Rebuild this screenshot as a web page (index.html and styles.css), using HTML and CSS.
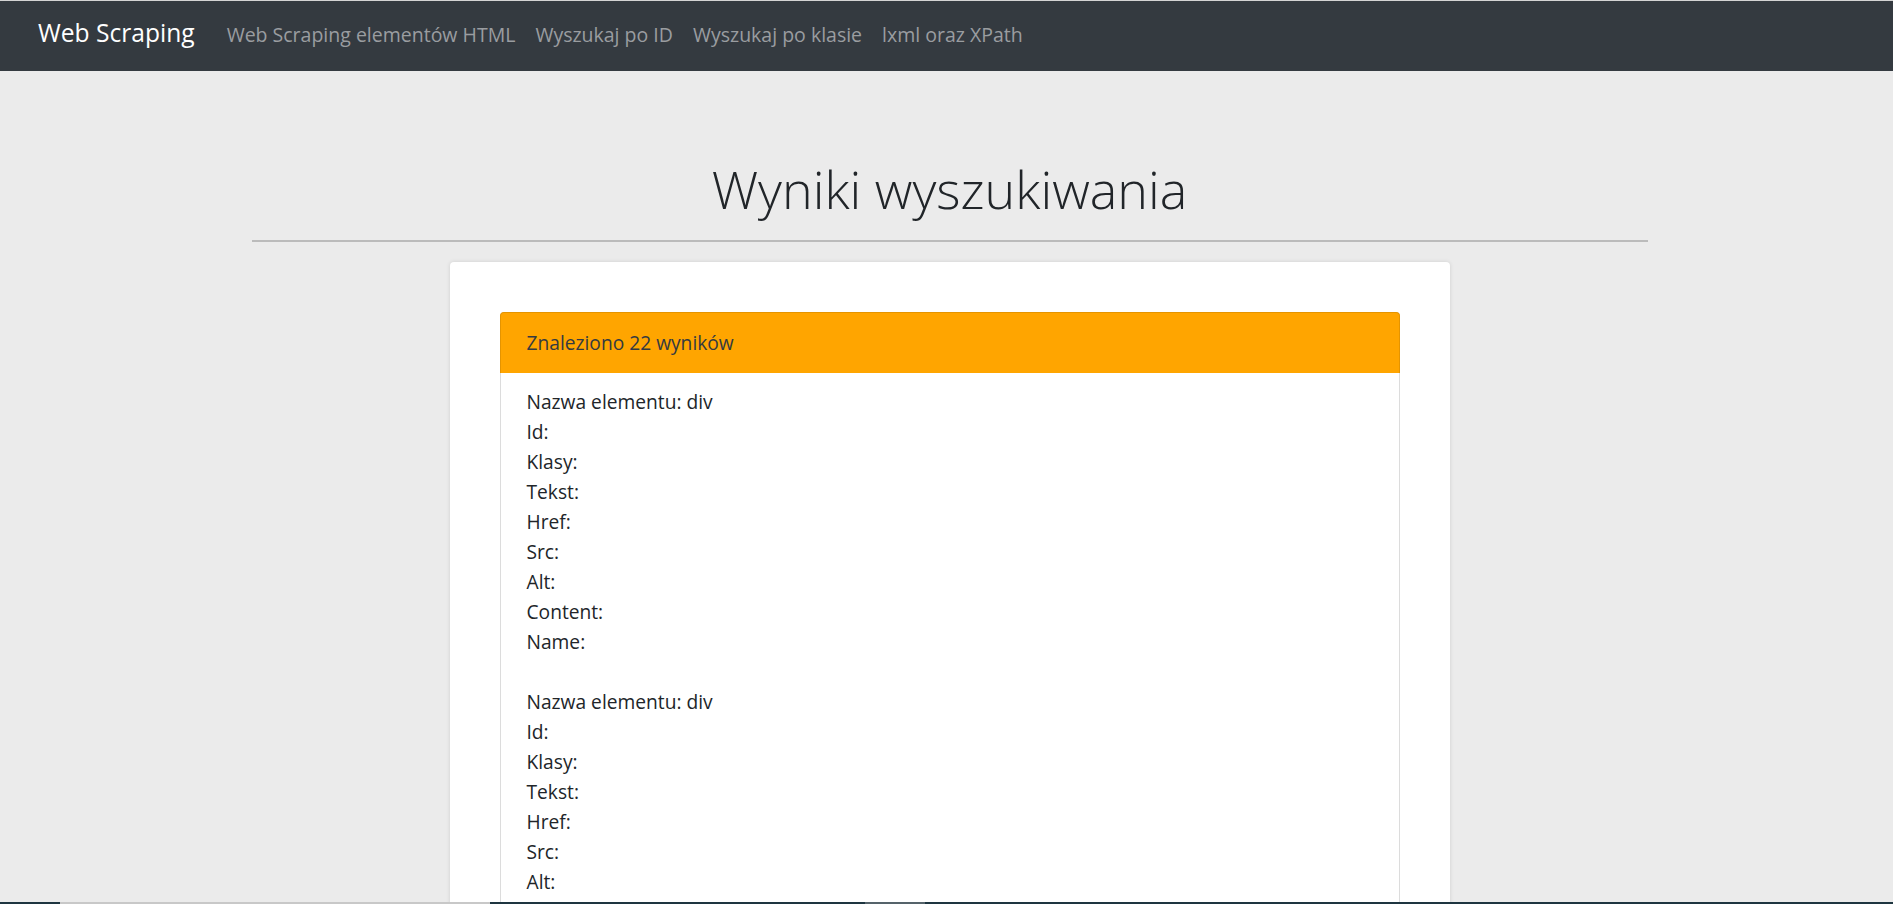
FILE: index.html
```html
<!DOCTYPE html>
<html lang="pl">
<head>
<meta charset="utf-8">
<title>Web Scraping</title>
<link rel="stylesheet" href="styles.css">
</head>
<body>
<nav class="navbar">
  <a class="brand" href="#">Web Scraping</a>
  <ul class="nav">
    <li><a href="#">Web Scraping elementów HTML</a></li>
    <li><a href="#">Wyszukaj po ID</a></li>
    <li><a href="#">Wyszukaj po klasie</a></li>
    <li><a href="#">lxml oraz XPath</a></li>
  </ul>
</nav>
<main class="page">
  <h1 class="title">Wyniki wyszukiwania</h1>
  <hr class="rule">
  <section class="sheet">
    <div class="panel">
      <div class="panel-header">Znaleziono 22 wyników</div>
      <div class="panel-body">
        <div class="result">
          <div>Nazwa elementu: div</div>
          <div>Id:</div>
          <div>Klasy:</div>
          <div>Tekst:</div>
          <div>Href:</div>
          <div>Src:</div>
          <div>Alt:</div>
          <div>Content:</div>
          <div>Name:</div>
        </div>
        <div class="result">
          <div>Nazwa elementu: div</div>
          <div>Id:</div>
          <div>Klasy:</div>
          <div>Tekst:</div>
          <div>Href:</div>
          <div>Src:</div>
          <div>Alt:</div>
          <div>Content:</div>
          <div>Name:</div>
        </div>
        <div class="result">
          <div>Nazwa elementu: div</div>
          <div>Id:</div>
          <div>Klasy:</div>
          <div>Tekst:</div>
          <div>Href:</div>
          <div>Src:</div>
          <div>Alt:</div>
          <div>Content:</div>
          <div>Name:</div>
        </div>
      </div>
    </div>
  </section>
</main>
<div class="taskbar"><span class="tb-light"></span><span class="tb-gap"></span><span class="tb-mid"></span></div>
</body>
</html>
```
FILE: styles.css
```css
html, body {
  margin: 0;
  padding: 0;
}
body {
  background: #ebebeb;
  font-family: "Open Sans", "Noto Sans", sans-serif;
  font-size: 19.2px;
  line-height: 30px;
  color: #212529;
  border-top: 1px solid #d4d4d4;
}
a {
  text-decoration: none;
}
.navbar {
  display: flex;
  align-items: baseline;
  height: 70px;
  box-sizing: border-box;
  padding: 17px 20px 0 38px;
  background: #343a40;
}
.brand {
  color: #fff;
  font-size: 24.6px;
  margin-right: 22px;
}
.nav {
  display: flex;
  list-style: none;
  margin: 0;
  padding: 0;
}
.nav a {
  display: block;
  padding: 0 10px;
  color: #9a9da0;
  font-size: 19.5px;
}
.page {
  padding-left: 6px;
  display: flex;
  flex-direction: column;
  align-items: center;
}
.title {
  margin: 87px 0 0;
  font-size: 52px;
  font-weight: 300;
  line-height: 1.2;
  color: #212529;
}
.rule {
  width: 1396px;
  margin: 20px 0 20px;
  border: 0;
  border-top: 2px solid #bbbbbb;
  height: 0;
}
.sheet {
  width: 1000px;
  box-sizing: border-box;
  padding: 50px;
  background: #fff;
  border-radius: 4px;
  box-shadow: 0 0 4px rgba(0, 0, 0, 0.12);
}
.panel {
  border: 1px solid #dcdcdc;
  border-radius: 4px;
}
.panel-header {
  margin: -1px -1px 0;
  padding: 15px 26px;
  background: #ffa500;
  border: 1px solid #e59400;
  border-bottom: 0;
  border-radius: 4px 4px 0 0;
  color: #343a40;
}
.panel-body {
  padding: 14px 26px 25px;
}
.result {
  margin-bottom: 30px;
}
.taskbar {
  position: fixed;
  left: 0;
  right: 0;
  bottom: 0;
  height: 2px;
  background: #1e3540;
  display: flex;
}
.tb-light {
  margin-left: 60px;
  width: 430px;
  background: #c8c8c8;
}
.tb-gap {
  width: 375px;
}
.tb-mid {
  width: 60px;
  background: #55636a;
}
```
